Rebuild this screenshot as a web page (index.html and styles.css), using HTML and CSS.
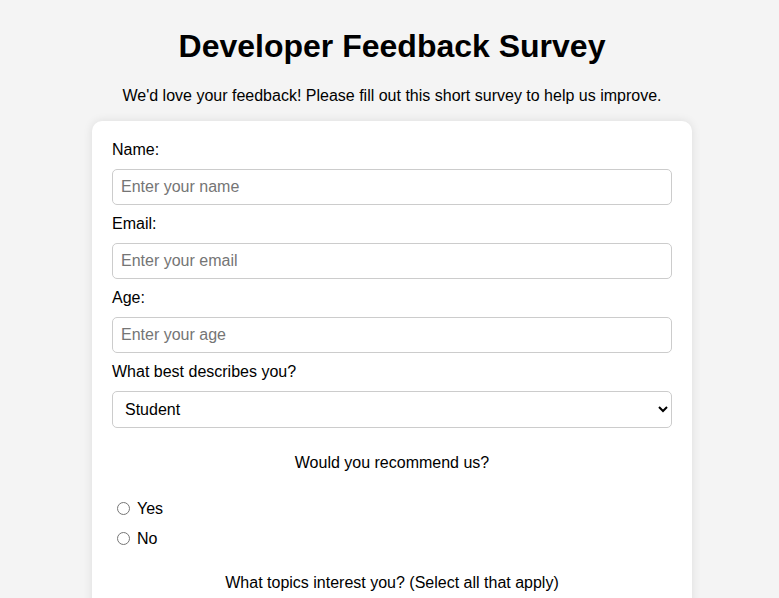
FILE: index.html
```html
<!DOCTYPE html>
<html lang="en">
<head>
<meta charset="utf-8">
<title>Developer Feedback Survey</title>
<link rel="stylesheet" href="styles.css">
</head>
<body>
  <h1 class="title">Developer Feedback Survey</h1>
  <p class="intro">We'd love your feedback! Please fill out this short survey to help us improve.</p>
  <form class="card">
    <label class="field-label" for="name">Name:</label>
    <input class="field" id="name" type="text" placeholder="Enter your name">
    <label class="field-label" for="email">Email:</label>
    <input class="field" id="email" type="email" placeholder="Enter your email">
    <label class="field-label" for="age">Age:</label>
    <input class="field" id="age" type="number" placeholder="Enter your age">
    <label class="field-label" for="role">What best describes you?</label>
    <select class="field select" id="role">
      <option>Student</option>
      <option>Full-time Developer</option>
      <option>Freelancer</option>
      <option>Other</option>
    </select>
    <p class="question">Would you recommend us?</p>
    <div class="options">
      <label class="option"><input class="choice" type="radio" name="rec" value="yes">Yes</label>
      <label class="option"><input class="choice" type="radio" name="rec" value="no">No</label>
    </div>
    <p class="question">What topics interest you? (Select all that apply)</p>
    <div class="options">
      <label class="option"><input class="choice" type="checkbox">Front-end</label>
      <label class="option"><input class="choice" type="checkbox">Back-end</label>
    </div>
  </form>
</body>
</html>
```

FILE: styles.css
```css
html {
  background: #f4f4f4;
}
body {
  margin: 0;
  padding: 28px 0 40px 5px;
  font-family: "Liberation Sans", Arial, sans-serif;
  font-size: 16px;
  color: #000;
  background: #f4f4f4;
}
.title {
  margin: 0 0 22px;
  font-size: 32px;
  line-height: 37px;
  font-weight: bold;
  text-align: center;
}
.intro {
  margin: 0 0 16px;
  line-height: 18.4px;
  text-align: center;
}
.card {
  box-sizing: border-box;
  width: 600px;
  margin: 0 auto;
  padding: 20px;
  background: #fff;
  border-radius: 10px;
  box-shadow: 0 0 10px rgba(0, 0, 0, 0.1);
}
.field-label {
  display: block;
  line-height: 18px;
  padding-bottom: 1px;
}
.field {
  display: block;
  box-sizing: border-box;
  width: 100%;
  height: 36px;
  margin: 9px 0 10px;
  padding: 0 8px;
  font-family: "Liberation Sans", Arial, sans-serif;
  font-size: 16px;
  color: #000;
  background: #fff;
  border: 1px solid #ccc;
  border-radius: 5px;
}
.field::placeholder {
  color: #757575;
}
.select {
  height: 37px;
  margin-bottom: 26px;
}
.question {
  margin: 0;
  line-height: 18.4px;
  text-align: center;
}
.options {
  margin: 21px 0 20px;
}
.option {
  display: flex;
  align-items: center;
  height: 30px;
}
.choice {
  width: 13px;
  height: 13px;
  margin: 0 7px 0 5px;
}
```
